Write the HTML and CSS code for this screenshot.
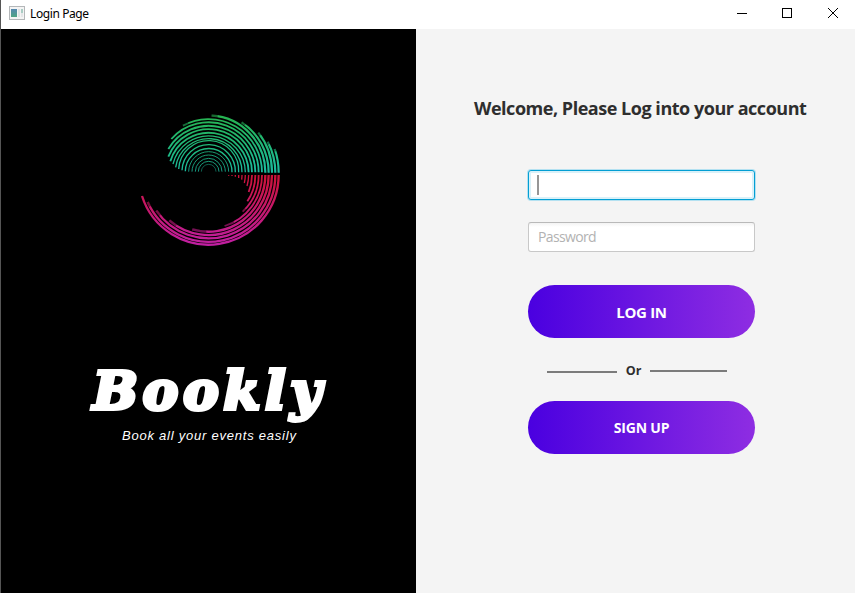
FILE: index.html
```html
<!DOCTYPE html>
<html lang="en">
<head>
<meta charset="utf-8">
<title>Login Page</title>
<link rel="stylesheet" href="styles.css">
</head>
<body>
<div class="window">
  <header class="titlebar">
    <svg class="app-icon" width="16" height="14" viewBox="0 0 16 14">
      <defs><linearGradient id="ic" x1="0" y1="0" x2="0" y2="1"><stop offset="0" stop-color="#5588b0"/><stop offset="1" stop-color="#4fa583"/></linearGradient></defs>
      <rect x=".5" y=".5" width="15" height="13" fill="#f4f4f4" stroke="#b4b7b9"/>
      <rect x="2" y="3" width="6" height="8" fill="url(#ic)"/>
      <rect x="9" y="3" width="2" height="8" fill="#dfe3e4"/>
      <rect x="12" y="3" width="2" height="4" fill="#a9ccc4"/>
      <rect x="12" y="7" width="2" height="4" fill="#e4e6e8"/>
    </svg>
    <span class="caption">Login Page</span>
    <svg class="controls" width="102" height="11" viewBox="0 0 102 11" fill="none" stroke="#000">
      <path d="M0 5.500h10M45.500 .5h9v9h-9z" shape-rendering="crispEdges"/>
      <path d="M91 0l10 10M101 0l-10 10"/>
    </svg>
  </header>
  <main class="content">
    <section class="brand">
      <svg class="logo" width="160" height="150" viewBox="0 0 480 450" fill="none">
        <defs>
          <linearGradient id="g" gradientUnits="userSpaceOnUse" x1="0" y1="30" x2="0" y2="204"><stop offset="0" stop-color="#27b34f"/><stop offset="1" stop-color="#1abca0"/></linearGradient>
          <linearGradient id="r" gradientUnits="userSpaceOnUse" x1="0" y1="209" x2="0" y2="424"><stop offset="0" stop-color="#cc1237"/><stop offset="1" stop-color="#c01fa4"/></linearGradient>
        </defs>
        <g stroke="url(#g)">
          <path stroke-width="6.500" d="M434 132A210 210 0 0 1 446 203M413 110A200 200 0 0 1 436 203M385 83A190 190 0 0 1 426 203M335 52A180 180 0 0 1 416 203M245 32A170 170 0 0 1 406 203"/>
          <path stroke-width="5.500" d="M159 62A160 160 0 0 1 396 202M124 102A150 150 0 0 1 386 202M115 132A140 140 0 0 1 376 202M115 155A130 130 0 0 1 366 202M121 169A120 120 0 0 1 356 202"/>
          <path stroke-width="4" d="M129 177A110 110 0 0 1 346 202M137 187A100 100 0 0 1 336 202M146 192A90 90 0 0 1 326 202M156 196A80 80 0 0 1 316 202M166 199A70 70 0 0 1 306 202"/>
          <path stroke-width="2.500" d="M176 200A60 60 0 0 1 296 200M186 200A50 50 0 0 1 286 200M196 200A40 40 0 0 1 276 200M205 200A31 31 0 0 1 267 200"/>
          <path stroke-width="1.500" d="M214 200A22 22 0 0 1 258 200"/>
        </g>
        <g stroke="url(#r)">
          <path stroke-width="7" d="M446 210A210 210 0 0 1 36 273M436 210A200 200 0 0 1 53 291M426 210A190 190 0 0 1 79 317M416 210A180 180 0 0 1 118 346M406 210A170 170 0 0 1 187 373"/>
          <path stroke-width="5.500" d="M396 210A160 160 0 0 1 284 363M386 210A150 150 0 0 1 338 320M376 210A140 140 0 0 1 352 289M366 210A130 130 0 0 1 356 261"/>
          <path stroke-width="4" d="M356 210A120 120 0 0 1 351 243M346 210A110 110 0 0 1 343 234M336 210A100 100 0 0 1 335 224M326 210V219M316 210V215M306 210V213M296 210V212"/>
        </g>
        <g stroke="#000" stroke-width="8" opacity=".4">
          <path d="M187 373A170 170 0 0 0 229 380M118 346A180 180 0 0 0 139 361M79 317A190 190 0 0 0 90 331M53 291A200 200 0 0 0 60 304M284 363A160 160 0 0 0 312 351M338 320A150 150 0 0 0 346 311M245 32A170 170 0 0 1 263 34M159 62A160 160 0 0 1 175 54M335 52A180 180 0 0 1 346 59M385 83A190 190 0 0 1 391 91M434 132A210 210 0 0 1 436 139M413 110A200 200 0 0 1 417 118"/>
        </g>
      </svg>
      <h1 class="name">Bookly</h1>
      <p class="tagline">Book all your events easily</p>
    </section>
    <section class="login">
      <h2 class="welcome">Welcome, Please Log into your account</h2>
      <form class="form">
        <div class="field focused"><i class="caret"></i></div>
        <div class="field">Password</div>
        <button class="btn login-btn" type="button">LOG IN</button>
        <div class="divider"><i class="line left"></i><span>Or</span><i class="line right"></i></div>
        <button class="btn signup" type="button">SIGN UP</button>
      </form>
    </section>
  </main>
</div>
</body>
</html>
```
FILE: styles.css
```css
* { box-sizing: border-box; }
body { margin: 0; overflow: hidden; font-family: "Open Sans", "Noto Sans", sans-serif; }
.window { width: 855px; height: 593px; display: flex; flex-direction: column; background: #fff; border-left: 1px solid #555; }
.titlebar { height: 29px; flex: none; display: flex; align-items: flex-start; padding: 6px 16px 0 8px; }
.caption { margin-left: 5px; font: 12px/16px "Noto Sans", sans-serif; letter-spacing: -.4px; color: #000; white-space: nowrap; }
.controls { margin: 2px 0 0 auto; }
.content { flex: 1; display: flex; min-height: 0; }
.brand { width: 415px; background: #000; color: #fff; display: flex; flex-direction: column; align-items: flex-start; }
.logo { margin: 76px 0 0 129px; }
.name { margin: 105px 0 0 92px; font: italic bold 53px/60px "DejaVu Serif", serif; letter-spacing: 5px; -webkit-text-stroke: 4px #fff; white-space: nowrap; }
.tagline { margin: 7px 0 0 121px; font: italic 13px/18px "Liberation Sans", sans-serif; letter-spacing: .77px; white-space: nowrap; }
.login { flex: 1; background: #f4f4f4; color: #2e2e2e; }
.welcome { margin: 67px 0 0 58px; font: bold 18px/25px "Open Sans", sans-serif; letter-spacing: -.47px; white-space: nowrap; }
.form { width: 227px; margin: 49px 0 0 112px; display: flex; flex-direction: column; }
.field { height: 30px; margin-bottom: 22px; padding: 0 9px 1px; border: 1px solid #c8c8c8; border-top-color: #b9b9b9; border-radius: 3px; background: linear-gradient(#f3f3f3, #fff 4px); display: flex; align-items: center; font-size: 14px; letter-spacing: -.65px; color: #b2b2b2; }
.focused { border-color: #039ed3; background: #fff; box-shadow: 0 0 0 1px #b4e1f1, inset 0 0 0 2px #d9f1f9; padding: 0 8px; }
.caret { width: 2px; height: 20px; background: #969696; }
.btn { height: 53px; margin: 11px 0 0; padding: 0; border: 0; border-radius: 27px; background: linear-gradient(90deg, #4a00e0, #8e2de2); color: #fff; font: bold 14px/20px "Open Sans", sans-serif; letter-spacing: -.2px; }
.login-btn { font-size: 15px; letter-spacing: -.3px; }
.divider { height: 63px; display: flex; align-items: flex-start; padding-left: 19px; font: bold 12.5px/18px "Open Sans", sans-serif; }
.divider span { width: 33px; margin-top: 24px; text-align: center; }
.line { height: 2px; background: #7b7b7b; }
.left { width: 70px; margin-top: 33px; }
.right { width: 77px; margin-top: 32px; }
.signup { margin-top: 0; }
```
